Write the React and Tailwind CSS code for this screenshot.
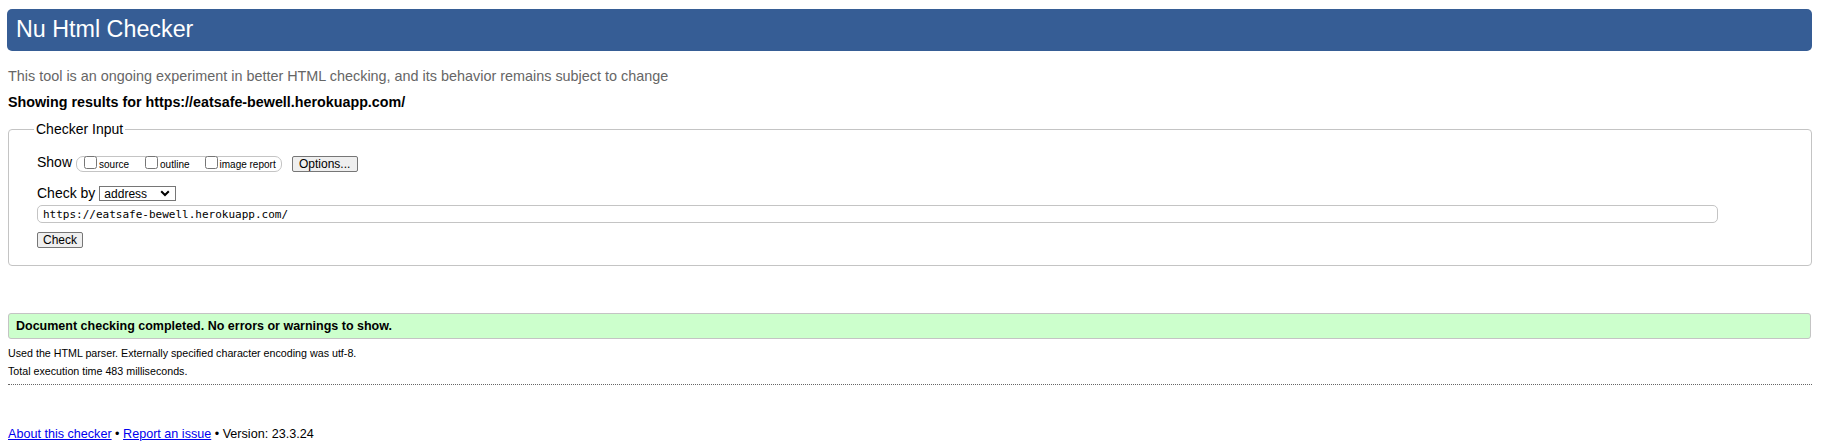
import React from "react";

function Checkbox() {
  return (
    <input
      type="checkbox"
      readOnly
      className="w-[13px] h-[13px] m-0 -mt-[1px] shrink-0"
    />
  );
}

export default function App() {
  return (
    <div className="min-h-[447px] w-full bg-white pt-[9px] text-[14px] text-black font-['Liberation_Sans',Arial,sans-serif]">
      <header className="ml-[7px] mr-[9px] flex h-[42px] items-center rounded-[5px] bg-[#365d95] pl-[9px]">
        <h1 className="text-[23.3px] leading-none font-normal text-white">Nu Html Checker</h1>
      </header>

      <p className="ml-[8px] mt-[17px] text-[14.4px] leading-[16px] text-[#666666]">
        This tool is an ongoing experiment in better HTML checking, and its behavior remains subject to change
      </p>

      <p className="ml-[8px] mt-[10px] text-[14.3px] leading-[16px] font-bold">
        Showing results for https://eatsafe-bewell.herokuapp.com/
      </p>

      <fieldset className="ml-[8px] mr-[9px] mt-[11px] rounded-[4px] border border-[#c4c4c4] pl-[28px] pt-[17px] pb-[17px]">
        <legend className="-ml-[3px] px-[2px] leading-[16px]">Checker Input</legend>

        <div className="flex items-start">
          <span className="leading-[16px]">Show</span>
          <div className="ml-[4px] mt-[2px] flex h-[16px] items-start rounded-[7px] border border-[#c4c4c4] pl-[7px] pr-[5px]">
            <Checkbox />
            <span className="ml-[2px] mt-[2px] text-[10px] leading-[12px]">source</span>
            <span className="ml-[16px] flex items-start">
              <Checkbox />
              <span className="ml-[2px] mt-[2px] text-[10px] leading-[12px]">outline</span>
            </span>
            <span className="ml-[15px] flex items-start">
              <Checkbox />
              <span className="ml-[2px] mt-[2px] text-[10px] leading-[12px]">image report</span>
            </span>
          </div>
          <button className="ml-[10px] mt-[2px] flex h-[16px] w-[66px] items-center justify-center rounded-[2px] border border-[#767676] bg-[#efefef] text-[12px] leading-none">
            Options...
          </button>
        </div>

        <div className="mt-[13px] flex items-start">
          <span className="leading-[16px]">Check by</span>
          <div className="ml-[4px] mt-[1px] flex h-[15px] w-[77px] items-center border border-[#767676] pl-[4px] text-[12px] leading-none">
            <span>address</span>
            <svg className="ml-auto mr-[5px]" width="10" height="7" viewBox="0 0 10 7">
              <path d="M1.2 1.2 L5 5 L8.8 1.2" fill="none" stroke="#000" strokeWidth="2" />
            </svg>
          </div>
        </div>

        <div className="mt-[4px] flex h-[18px] w-[1681px] items-center rounded-[5px] border border-[#c4c4c4] pl-[5px] text-[11px] leading-none font-['DejaVu_Sans_Mono',monospace]">
          https://eatsafe-bewell.herokuapp.com/
        </div>

        <button className="mt-[9px] flex h-[16px] w-[46px] items-center justify-center rounded-[2px] border border-[#767676] bg-[#efefef] text-[12px] leading-none">
          Check
        </button>
      </fieldset>

      <div className="ml-[8px] mr-[10px] mt-[47px] flex h-[26px] items-center rounded-[3px] border border-[#c4c4c4] bg-[#ccffcc] pl-[7px] text-[12.5px] leading-[15px] font-bold">
        Document checking completed. No errors or warnings to show.
      </div>

      <p className="ml-[8px] mt-[8px] text-[10.7px] leading-[13px]">
        Used the HTML parser. Externally specified character encoding was utf-8.
      </p>
      <p className="ml-[8px] mt-[5px] text-[10.7px] leading-[13px]">
        Total execution time 483 milliseconds.
      </p>

      <div className="ml-[8px] mr-[9px] mt-[6px] border-t border-dotted border-[#666666]"></div>

      <p className="ml-[8px] mt-[42px] text-[12.6px] leading-[15px]">
        <a href="#" className="text-[#0000ee] underline">About this checker</a>
        {" \u2022 "}
        <a href="#" className="text-[#0000ee] underline">Report an issue</a>
        {" \u2022 Version: 23.3.24"}
      </p>
    </div>
  );
}
